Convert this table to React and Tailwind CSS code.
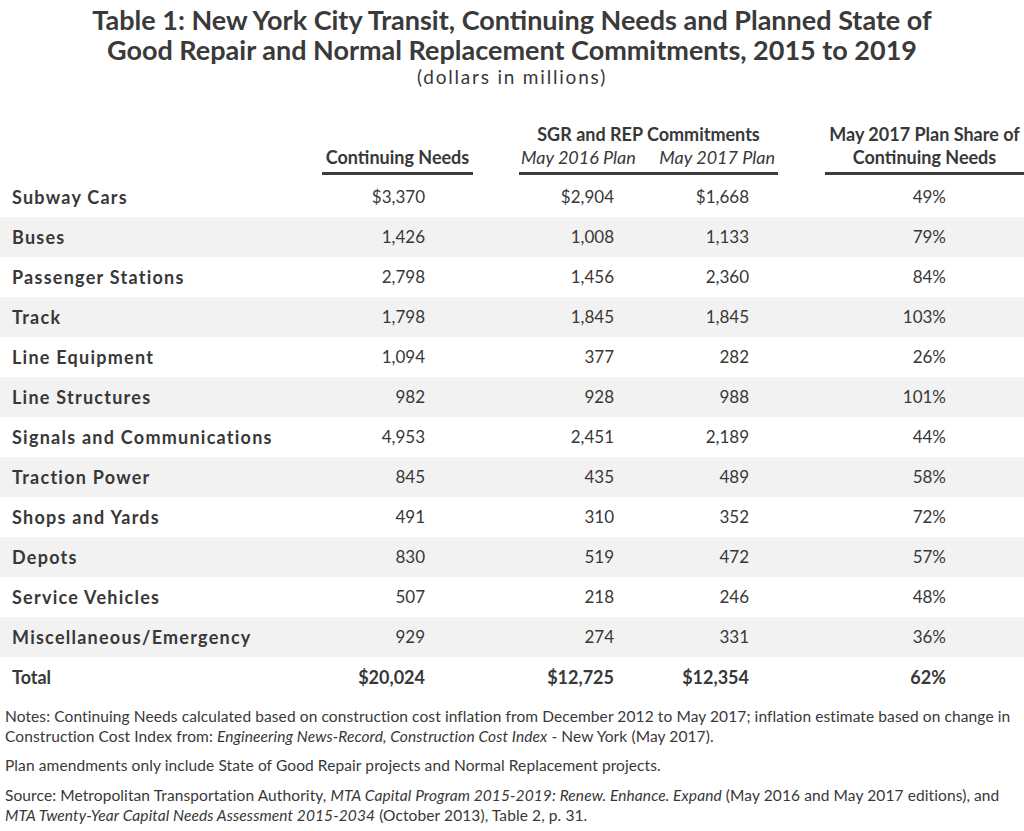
const rows = [
  ['Subway Cars', '$3,370', '$2,904', '$1,668', '49%'],
  ['Buses', '1,426', '1,008', '1,133', '79%'],
  ['Passenger Stations', '2,798', '1,456', '2,360', '84%'],
  ['Track', '1,798', '1,845', '1,845', '103%'],
  ['Line Equipment', '1,094', '377', '282', '26%'],
  ['Line Structures', '982', '928', '988', '101%'],
  ['Signals and Communications', '4,953', '2,451', '2,189', '44%'],
  ['Traction Power', '845', '435', '489', '58%'],
  ['Shops and Yards', '491', '310', '352', '72%'],
  ['Depots', '830', '519', '472', '57%'],
  ['Service Vehicles', '507', '218', '246', '48%'],
  ['Miscellaneous/Emergency', '929', '274', '331', '36%'],
]

const grid = 'grid grid-cols-[322px_151px_46px_129px_130px_47px_199px]'

function Row({ cells, striped, total }) {
  const [label, cn, p16, p17, share] = cells
  const num = total ? 'text-[18px] font-bold' : 'text-[17px] font-normal'
  return (
    <div className={`${grid} h-10 items-center ${striped ? 'bg-[#f2f2f2]' : 'bg-white'}`}>
      <div className={`pl-3 text-[18px] font-bold ${total ? '' : 'tracking-[1.25px]'}`}>{label}</div>
      <div className={`pr-[48px] text-right ${num}`}>{cn}</div>
      <div />
      <div className={`pr-[34px] text-right ${num}`}>{p16}</div>
      <div className={`pr-[29px] text-right ${num}`}>{p17}</div>
      <div />
      <div className={`pr-[78px] text-right ${num}`}>{share}</div>
    </div>
  )
}

export default function App() {
  return (
    <div className="min-h-[831px] w-[1024px] bg-white text-[#383838]" style={{ fontFamily: 'Lato, "Open Sans", sans-serif' }}>
      <div className="pt-[5px] text-center">
        <h1 className="text-[27px] font-bold leading-[30px] text-[#3a3a3a]">
          Table 1: New York City Transit, Continuing Needs and Planned State of
          <br />
          Good Repair and Normal Replacement Commitments, 2015 to 2019
        </h1>
        <p className="mt-[1px] text-[19px] leading-[22px] tracking-[1.8px]">(dollars in millions)</p>
      </div>

      <div className={`${grid} mt-[35px] text-[18px] font-bold leading-[23px]`}>
        <div />
        <div className="flex items-end justify-center border-b-[3px] border-[#3d3d3d] pb-[3px]">
          <span>Continuing Needs</span>
        </div>
        <div />
        <div className="col-span-2 border-b-[3px] border-[#3d3d3d] pb-[3px]">
          <div className="text-center">SGR and REP Commitments</div>
          <div className="flex justify-between pl-[2px] pr-[3px] font-normal italic">
            <span>May 2016 Plan</span>
            <span>May 2017 Plan</span>
          </div>
        </div>
        <div />
        <div className="border-b-[3px] border-[#3d3d3d] pb-[3px] text-center">
          <div className="whitespace-nowrap">May 2017 Plan Share of</div>
          <div>Continuing Needs</div>
        </div>
      </div>

      <div className="mt-[2px]">
        {rows.map((r, i) => (
          <Row key={r[0]} cells={r} striped={i % 2 === 1} />
        ))}
        <Row cells={['Total', '$20,024', '$12,725', '$12,354', '62%']} total />
      </div>

      <div className="mt-[9px] pl-[5px] text-[15.5px] leading-[20px] tracking-[0.1px]">
        <p>
          Notes: Continuing Needs calculated based on construction cost inflation from December 2012 to May 2017; inflation estimate based on change in
          <br />
          Construction Cost Index from: <i>Engineering News-Record, Construction Cost Index</i> - New York (May 2017).
        </p>
        <p className="mt-[9px]">Plan amendments only include State of Good Repair projects and Normal Replacement projects.</p>
        <p className="mt-[10px]">
          Source: Metropolitan Transportation Authority, <i>MTA Capital Program 2015-2019: Renew. Enhance. Expand</i> (May 2016 and May 2017 editions), and
          <br />
          <i>MTA Twenty-Year Capital Needs Assessment 2015-2034</i> (October 2013), Table 2, p. 31.
        </p>
      </div>
    </div>
  )
}
